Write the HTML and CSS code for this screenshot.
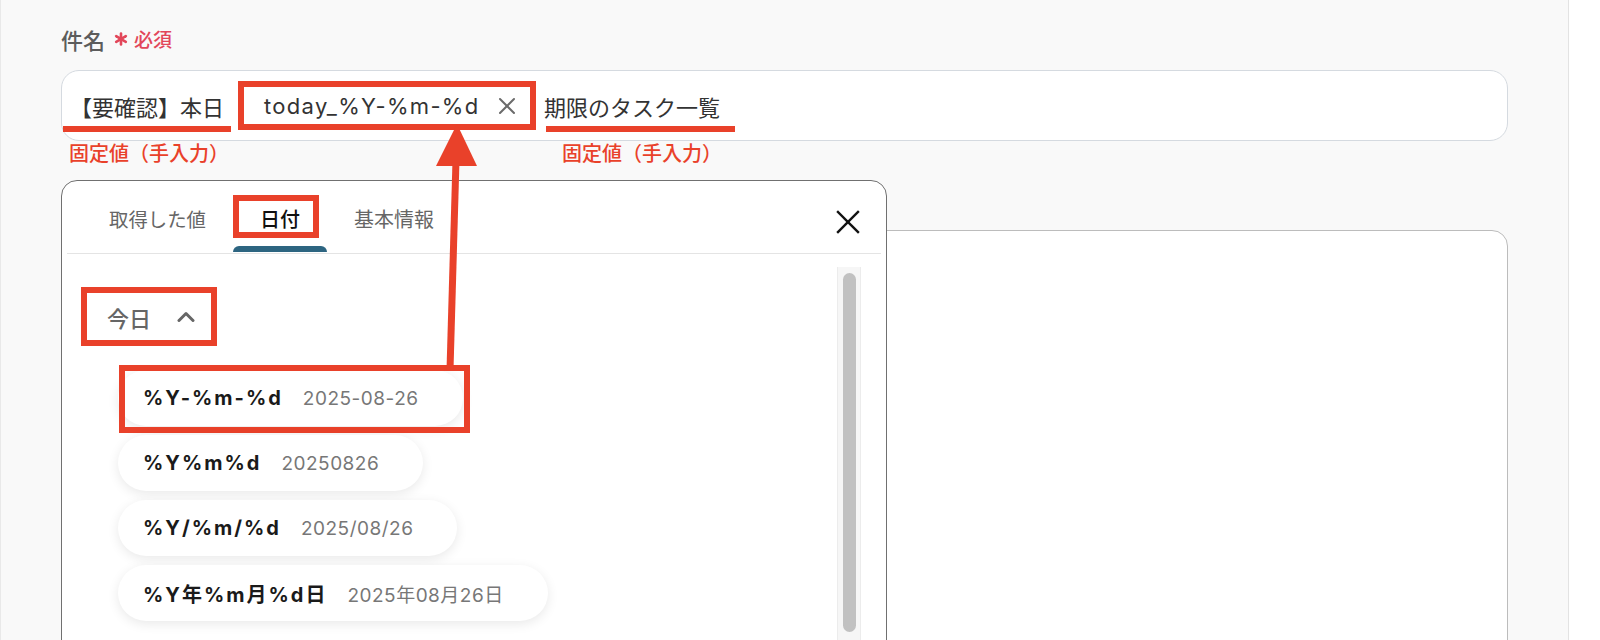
FILE: index.html
```html
<!DOCTYPE html>
<html lang="ja">
<head>
<meta charset="utf-8">
<title>件名</title>
<link rel="stylesheet" href="styles.css">
</head>
<body>
<div class="page">
  <div class="field">
    <div class="label">件名
      <span class="req">
        <svg class="star" width="14" height="14" viewBox="0 0 14 14"><g stroke="#e2475a" stroke-width="2.6" stroke-linecap="round"><line x1="7" y1="1.5" x2="7" y2="12.5"/><line x1="2.2" y1="4.2" x2="11.8" y2="9.8"/><line x1="2.2" y1="9.8" x2="11.8" y2="4.2"/></g></svg>
        必須
      </span>
    </div>
    <div class="input">
      <span class="seg seg-1">【要確認】本日<span class="cap cap-1">固定値（手入力）</span></span>
      <span class="chip">today_%Y-%m-%d
        <svg class="chip-x" width="18" height="18" viewBox="0 0 18 18"><g stroke="#6b6b6b" stroke-width="2" stroke-linecap="round"><line x1="2" y1="2" x2="16" y2="16"/><line x1="16" y1="2" x2="2" y2="16"/></g></svg>
      </span>
      <span class="seg seg-2">期限のタスク一覧<span class="cap cap-2">固定値（手入力）</span></span>
    </div>
  </div>
  <div class="box2"></div>

  <div class="popup">
    <div class="tabs">
      <div class="tab tab-first"><span class="tab-label">取得した値</span></div>
      <div class="tab active"><span class="tab-label">日付</span><span class="indicator"></span></div>
      <div class="tab"><span class="tab-label">基本情報</span></div>
      <svg class="close" width="24" height="24" viewBox="0 0 24 24"><g stroke="#111" stroke-width="2.4" stroke-linecap="square"><line x1="2" y1="2" x2="22" y2="22"/><line x1="22" y1="2" x2="2" y2="22"/></g></svg>
    </div>
    <div class="pbody">
      <div class="list">
        <div class="head"><span>今日</span>
          <svg width="18" height="11" viewBox="0 0 18 11"><polyline points="2,9.5 9,2.5 16,9.5" fill="none" stroke="#666" stroke-width="3" stroke-linecap="round" stroke-linejoin="round"/></svg>
        </div>
        <div class="pills">
          <div class="pill marked"><span class="code">%Y-%m-%d</span><span class="date">2025-08-26</span></div>
          <div class="pill"><span class="code">%Y%m%d</span><span class="date">20250826</span></div>
          <div class="pill"><span class="code">%Y/%m/%d</span><span class="date">2025/08/26</span></div>
          <div class="pill"><span class="code">%Y年%m月%d日</span><span class="date">2025年08月26日</span></div>
        </div>
      </div>
      <div class="sb"><div class="thumb"></div></div>
    </div>
  </div>

  <svg class="arrow" width="1568" height="640" viewBox="0 0 1568 640">
    <line x1="450" y1="370" x2="456" y2="160" stroke="#e9412a" stroke-width="7"/>
    <polygon points="457,124 436,166 477,166" fill="#e9412a"/>
  </svg>
</div>
</body>
</html>
```

FILE: styles.css
```css
body {
  margin: 0;
  background: #fff;
  font-family: Inter, "Noto Sans CJK JP", sans-serif;
}

.page {
  position: relative;
  width: 1569px;
  height: 640px;
  box-sizing: border-box;
  background: #f9f9f9;
  border-left: 1px solid #e9e9e9;
  border-right: 1px solid #e3e3e3;
  padding: 24px 60px 0 60px;
  overflow: hidden;
}

.label {
  display: flex;
  align-items: center;
  font-family: "Noto Sans CJK JP", sans-serif;
  font-size: 22px;
  line-height: 30px;
  font-weight: 500;
  color: #5c5c5c;
}

.req {
  display: flex;
  align-items: center;
  gap: 6px;
  margin-left: 9px;
  font-size: 19px;
  font-weight: 500;
  color: #e2475a;
}

.input {
  margin-top: 16px;
  height: 71px;
  box-sizing: border-box;
  border: 1px solid #d5dae0;
  border-radius: 18px;
  background: #fff;
  display: flex;
  align-items: center;
  padding-left: 8px;
}

.seg {
  position: relative;
  font-family: "Noto Sans CJK JP", sans-serif;
  font-size: 22px;
  line-height: 30px;
  color: #333;
  white-space: nowrap;
}

.seg::before {
  content: "";
  position: absolute;
  top: 35px;
  height: 6px;
  background: #e9412a;
}

.seg-1::before { left: -7px; right: -7px; }
.seg-2::before { left: 2px; right: -15px; }

.cap {
  position: absolute;
  top: 50px;
  font-size: 20px;
  line-height: 24px;
  font-weight: 500;
  color: #e9412a;
  white-space: nowrap;
}

.cap-1 { left: -1px; }
.cap-2 { left: 18px; }

.chip {
  margin: 0 14px 0 20px;
  width: 286px;
  height: 37px;
  box-sizing: border-box;
  outline: 6px solid #e9412a;
  background: #fff;
  display: flex;
  align-items: center;
  justify-content: space-between;
  padding: 0 14px 0 20px;
  font-size: 22px;
  letter-spacing: 1.3px;
  color: #333;
}

.box2 {
  margin-top: 89px;
  height: 520px;
  border: 1px solid #bcbcbc;
  border-radius: 16px;
  background: #fff;
}

.popup {
  position: absolute;
  left: 60px;
  top: 180px;
  width: 826px;
  height: 480px;
  box-sizing: border-box;
  border: 1px solid #707070;
  border-radius: 16px;
  background: #fff;
  display: flex;
  flex-direction: column;
  overflow: hidden;
  z-index: 2;
}

.tabs {
  display: flex;
  margin: 0 5px;
  height: 73px;
  box-sizing: border-box;
  border-bottom: 1px solid #e4e4e4;
  padding-left: 15px;
  flex-shrink: 0;
}

.tab {
  display: flex;
  flex-direction: column;
  padding: 0 27px;
  font-family: "Noto Sans CJK JP", sans-serif;
  font-size: 20px;
  color: #666;
}

.tab-first {
  font-size: 19.4px;
}

.tab-label {
  position: relative;
  margin-top: 24px;
  line-height: 28px;
  white-space: nowrap;
}

.tab.active .tab-label {
  color: #111;
  font-weight: 500;
}

.tab.active .tab-label::after {
  content: "";
  position: absolute;
  left: -27px;
  right: -19px;
  top: -10px;
  bottom: -5px;
  border: 6px solid #e9412a;
}

.indicator {
  margin: auto -27px 1px;
  height: 6px;
  background: #2d6581;
  border-radius: 6px 6px 0 0;
}

.close {
  margin: 29px 21px 0 auto;
}

.pbody {
  flex: 1;
  display: flex;
  min-height: 0;
}

.list {
  flex: 1;
  padding: 39px 0 0 25px;
}

.head {
  display: inline-flex;
  align-items: center;
  width: 124px;
  height: 47px;
  box-sizing: border-box;
  padding-left: 20px;
  gap: 26px;
  outline: 6px solid #e9412a;
  font-family: "Noto Sans CJK JP", sans-serif;
  font-size: 22px;
  font-weight: 500;
  color: #666;
}

.pills {
  display: flex;
  flex-direction: column;
  align-items: flex-start;
  gap: 9px;
  margin: 30px 0 0 31px;
}

.pill {
  position: relative;
  height: 56px;
  box-sizing: border-box;
  border-radius: 28px;
  background: #fff;
  box-shadow: 0 3px 12px rgba(0, 0, 0, 0.09);
  display: flex;
  align-items: center;
  gap: 20px;
  padding: 0 44px 0 25px;
  white-space: nowrap;
}

.pill.marked::after {
  content: "";
  position: absolute;
  left: 1px;
  right: -7px;
  top: -5px;
  bottom: -7px;
  border: 6px solid #e9412a;
}

.code {
  font-size: 20px;
  font-weight: 700;
  letter-spacing: 2px;
  color: #1a1a1a;
}

.date {
  font-size: 19px;
  letter-spacing: 0.5px;
  color: #777;
}

.sb {
  width: 24px;
  margin: 13px 25px 0 0;
  box-sizing: border-box;
  background: #f6f6f6;
  border-left: 1px solid #ececec;
  border-right: 1px solid #ececec;
  padding: 6px 4px 0 5px;
}

.thumb {
  height: 359px;
  border-radius: 7px;
  background: #c1c1c1;
}

.arrow {
  position: absolute;
  left: -1px;
  top: 0;
  z-index: 3;
  pointer-events: none;
}
```
